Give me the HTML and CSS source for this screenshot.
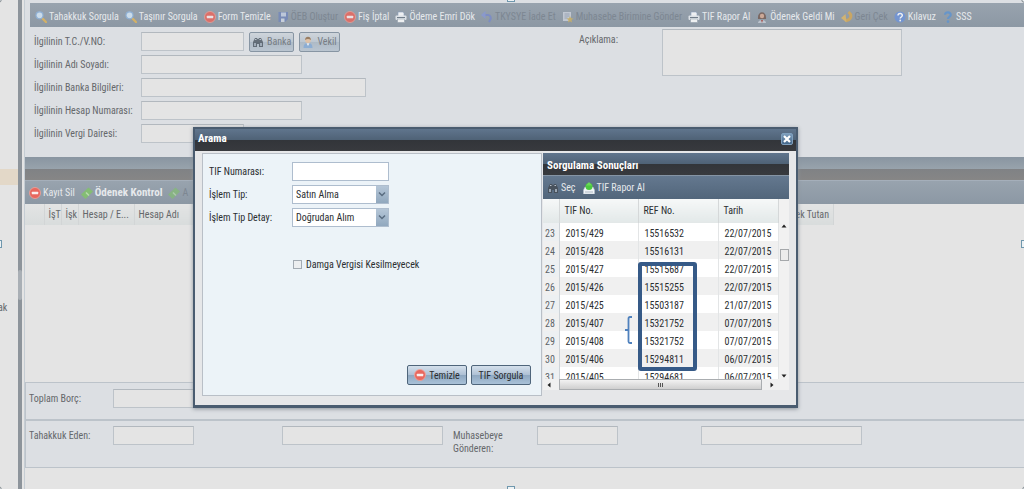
FILE: index.html
```html
<!DOCTYPE html>
<html lang="tr">
<head>
<meta charset="utf-8">
<title>Arama</title>
<link rel="stylesheet" href="styles.css">
</head>
<body>
<svg class="defs" aria-hidden="true">
  <symbol id="i-search" viewBox="0 0 12 12"><path d="M6.500 6.500 11 11" stroke="#e0b65c" stroke-width="2.400" stroke-linecap="round"/><circle cx="4.500" cy="4.300" r="3.500" fill="#d5e7f6" stroke="#8fb4dc" stroke-width="1.200"/></symbol>
  <symbol id="i-minus" viewBox="0 0 12 12"><circle cx="6" cy="6" r="5.500" fill="#e8685f" stroke="#f0a39b" stroke-width=".8"/><rect x="2.800" y="4.800" width="6.400" height="2.400" rx=".5" fill="#fbeeee"/></symbol>
  <symbol id="i-save" viewBox="0 0 12 12"><path d="M1.500 1h9.500v7l-3 3H1.500z" fill="#6f84bd"/><rect x="4" y="1.500" width="5" height="4" fill="#cfd9ee"/><rect x="4" y="7.500" width="3.500" height="3.500" fill="#dfe5ef"/></symbol>
  <symbol id="i-print" viewBox="0 0 12 12"><path d="M3 5V1h5l1 1v3" fill="#fff" stroke="#86a0c0" stroke-width=".6"/><rect x=".5" y="4.500" width="11" height="4.500" rx="1" fill="#e9edf1"/><path d="M2 6.500h8" stroke="#6c7885"/><rect x="2.500" y="8" width="7" height="3.500" fill="#fff" stroke="#8997a5" stroke-width=".5"/></symbol>
  <symbol id="i-undo" viewBox="0 0 12 12"><path d="M3 4h4a3 3 0 0 1 2 5l-1 2" fill="none" stroke="#7587d0" stroke-width="2"/><path d="M0 4l4.500-4v8z" fill="#8798da"/></symbol>
  <symbol id="i-note" viewBox="0 0 12 12"><rect x="1" y="1" width="8" height="9" fill="#d5dae3"/><path d="M2.500 3h5M2.500 5h5M2.500 7h3" stroke="#8d99ad" stroke-width=".8"/><path d="M8 5l1 2.200 2.500.3-2 1.500.5 2.500-2-1.200-2 1.200.5-2.500-2-1.500 2.500-.3z" fill="#d9b757"/></symbol>
  <symbol id="i-user" viewBox="0 0 12 12"><path d="M1.500 12c0-4 2-5 4.500-5s4.500 1 4.500 5z" fill="#80a8d6"/><path d="M4.500 7.200 6 10l1.500-2.800z" fill="#fff"/><circle cx="6" cy="4.200" r="2.800" fill="#eac09a"/><path d="M3 4c0-4.500 6-4.500 6 0-2-1.500-4-1.500-6 0z" fill="#8b633c"/></symbol>
  <symbol id="i-woman" viewBox="0 0 12 12"><path d="M2 8c-1-9 9-9 8 0z" fill="#765e56"/><circle cx="6" cy="5" r="2.200" fill="#d6aa94"/><path d="M2 12c0-4 8-4 8 0z" fill="#c4cbd4"/><path d="M5 9h2l-1 3z" fill="#a94c44"/></symbol>
  <symbol id="i-back" viewBox="0 0 12 12"><path d="M7.500 1c4.500 4 2 8-3 8.500" fill="none" stroke="#e0aa48" stroke-width="3"/><path d="M0 7 4.500 3l1 8.500z" fill="#edbd5c"/></symbol>
  <symbol id="i-help" viewBox="0 0 12 12"><circle cx="6" cy="6" r="5.500" fill="#6f94d8"/><path d="M4 4.500c0-3 4.500-2.500 4.300 0C8.200 6 6.200 6 6.200 7.500" fill="none" stroke="#fff" stroke-width="1.500"/><circle cx="6.200" cy="9.500" r=".9" fill="#fff"/></symbol>
  <symbol id="i-ask" viewBox="0 0 12 12"><path d="M3 3.800c0-3.500 6-3 5.700.2C8.500 6 6 6 6 8" fill="none" stroke="#5f94d0" stroke-width="2.200"/><circle cx="6" cy="10.600" r="1.300" fill="#5f94d0"/></symbol>
  <symbol id="i-bino" viewBox="0 0 12 12"><path d="M1 6 3 2h2l.5 1h1L7 2h2l2 4v5H7V8H5v3H1z" fill="#48525d"/><path d="M2 7h2v3H2zM8 7h2v3H8z" fill="#9aa6b3"/><path d="M3 3.500h1.500M7.500 3.500H9" stroke="#c5ced8" stroke-width=".9"/></symbol>
  <symbol id="i-tag" viewBox="0 0 12 12"><path d="M0 7.500 7.500.5 12 4.500 4.500 12z" fill="#84bd74"/><path d="M5 5.500l3 3" stroke="#b9dbae" stroke-width="1.500"/></symbol>
  <symbol id="i-export" viewBox="0 0 12 12"><path d="M.5 8 2 5h8l1.500 3v4H.5z" fill="#f0f4f7" stroke="#b6c2ce" stroke-width=".5"/><circle cx="6" cy="4.500" r="3.500" fill="#4cc93f"/><path d="M6 0 9 3.500H3z" fill="#6ada58"/><path d="M2 10h8" stroke="#aeb9c4"/></symbol>
</svg>

<div class="app">
  <aside class="side"><div class="side-mark"></div><span class="side-text">ak</span></aside>
  <div class="splitter"><span class="grip"></span></div>
  <main class="main">
    <nav class="toolbar top-bar">
      <button><svg><use href="#i-search"/></svg>Tahakkuk Sorgula</button>
      <button><svg><use href="#i-search"/></svg>Taşınır Sorgula</button>
      <button><svg><use href="#i-minus"/></svg>Form Temizle</button>
      <button disabled><svg><use href="#i-save"/></svg>ÖEB Oluştur</button>
      <button><svg><use href="#i-minus"/></svg>Fiş İptal</button>
      <button><svg><use href="#i-print"/></svg>Ödeme Emri Dök</button>
      <button disabled><svg><use href="#i-undo"/></svg>TKYSYE İade Et</button>
      <button disabled><svg><use href="#i-note"/></svg>Muhasebe Birimine Gönder</button>
      <button><svg><use href="#i-print"/></svg>TIF Rapor Al</button>
      <button><svg><use href="#i-woman"/></svg>Ödenek Geldi Mi</button>
      <button disabled><svg><use href="#i-back"/></svg>Geri Çek</button>
      <button><svg><use href="#i-help"/></svg>Kılavuz</button>
      <button><svg><use href="#i-ask"/></svg>SSS</button>
    </nav>

    <form class="person">
      <div class="fields">
        <label for="tc">İlgilinin T.C./V.NO:</label>
        <div class="row"><input id="tc" class="w-s">
          <button type="button" class="btn"><svg><use href="#i-bino"/></svg>Banka</button>
          <button type="button" class="btn"><svg><use href="#i-user"/></svg>Vekil</button></div>
        <label for="ad">İlgilinin Adı Soyadı:</label><input id="ad" class="w-m">
        <label for="banka">İlgilinin Banka Bilgileri:</label><input id="banka" class="w-l">
        <label for="hesap">İlgilinin Hesap Numarası:</label><input id="hesap" class="w-m">
        <label for="vergi">İlgilinin Vergi Dairesi:</label><input id="vergi" class="w-s">
      </div>
      <div class="note"><label for="aciklama">Açıklama:</label><textarea id="aciklama"></textarea></div>
    </form>

    <div class="grid-title"></div>
    <div class="toolbar grid-bar">
      <button><svg><use href="#i-minus"/></svg>Kayıt Sil</button>
      <button class="strong"><svg><use href="#i-tag"/></svg>Ödenek Kontrol</button>
      <button disabled><svg><use href="#i-tag"/></svg>A</button>
    </div>
    <div class="grid-body">
      <table class="accounts">
        <thead><tr><th class="c-no"></th><th class="c-ist">İşT</th><th class="c-ist">İşk</th><th class="c-code">Hesap / E...</th><th>Hesap Adı</th><th class="c-last">Ödenek Tutan</th></tr></thead>
      </table>
    </div>

    <section class="foot foot-sum">
      <label for="borc">Toplam Borç:</label><input id="borc">
    </section>
    <section class="foot foot-people">
      <label for="eden">Tahakkuk Eden:</label><input id="eden"><span></span><input aria-label="Tahakkuk Eden Adı">
      <label for="gonderen" class="two">Muhasebeye Gönderen:</label><input id="gonderen"><span></span><input aria-label="Gönderen Adı">
    </section>
    <div class="rest"></div>
  </main>
</div>

<div class="dialog" role="dialog" aria-labelledby="dlg-title">
  <header class="titlebar"><h1 id="dlg-title">Arama</h1>
    <button class="close" aria-label="Kapat"><svg viewBox="0 0 10 10"><path d="M2 2l6 6M8 2l-6 6" stroke="#fff" stroke-width="2.200"/></svg></button></header>
  <div class="dialog-body">
    <form class="search">
      <div class="criteria">
        <label for="tif">TIF Numarası:</label><input id="tif">
        <label for="tip">İşlem Tip:</label>
        <div class="combo"><select id="tip"><option>Satın Alma</option></select><svg viewBox="0 0 12 17"><path d="M3 6.500l3 3 3-3" fill="none" stroke="#596c80" stroke-width="1.500"/></svg></div>
        <label for="detay">İşlem Tip Detay:</label>
        <div class="combo"><select id="detay"><option>Doğrudan Alım</option></select><svg viewBox="0 0 12 17"><path d="M3 6.500l3 3 3-3" fill="none" stroke="#596c80" stroke-width="1.500"/></svg></div>
      </div>
      <label class="check"><input type="checkbox">Damga Vergisi Kesilmeyecek</label>
      <div class="actions">
        <button type="button" class="btn"><svg><use href="#i-minus"/></svg>Temizle</button>
        <button type="button" class="btn">TIF Sorgula</button>
      </div>
    </form>
    <section class="results">
      <h2 class="titlebar">Sorgulama Sonuçları</h2>
      <div class="toolbar">
        <button><svg><use href="#i-bino"/></svg>Seç</button>
        <button><svg><use href="#i-export"/></svg>TIF Rapor Al</button>
      </div>
      <div class="list">
        <table>
          <thead><tr><th class="c-row"></th><th class="c-tif">TIF No.</th><th class="c-ref">REF No.</th><th>Tarih</th></tr></thead>
          <tbody>
            <tr><td>23</td><td>2015/429</td><td>15516532</td><td>22/07/2015</td></tr>
            <tr><td>24</td><td>2015/428</td><td>15516131</td><td>22/07/2015</td></tr>
            <tr><td>25</td><td>2015/427</td><td>15515687</td><td>22/07/2015</td></tr>
            <tr><td>26</td><td>2015/426</td><td>15515255</td><td>22/07/2015</td></tr>
            <tr><td>27</td><td>2015/425</td><td>15503187</td><td>21/07/2015</td></tr>
            <tr><td>28</td><td>2015/407</td><td>15321752</td><td>07/07/2015</td></tr>
            <tr><td>29</td><td>2015/408</td><td>15321752</td><td>07/07/2015</td></tr>
            <tr><td>30</td><td>2015/406</td><td>15294811</td><td>06/07/2015</td></tr>
            <tr><td>31</td><td>2015/405</td><td>15294681</td><td>06/07/2015</td></tr>
          </tbody>
        </table>
        <div class="vbar"><svg class="arrow" viewBox="0 0 6 6"><path d="M3 1.500 5.500 4.500h-5z"/></svg><span></span><svg class="arrow" viewBox="0 0 6 6"><path d="M3 4.500.5 1.500h5z"/></svg></div>
        <div class="frame"></div>
        <svg class="brace" viewBox="0 0 9 28"><path d="M8 1H6Q4.500 1 4.500 2.500V14H1h3.500v11.500Q4.500 27 6 27h2" fill="none" stroke="#4f81bd" stroke-width="1.800"/></svg>
      </div>
      <div class="hbar"><svg class="arrow" viewBox="0 0 6 6"><path d="M1.500 3 4.500.5v5z"/></svg><span><svg class="arrow" viewBox="0 0 6 6"><path d="M.5 1v4M2.500 1v4M4.500 1v4" stroke="#555"/></svg></span><svg class="arrow" viewBox="0 0 6 6"><path d="M4.500 3 1.500.5v5z"/></svg></div>
    </section>
  </div>
</div>

<i class="handle h-top"></i><i class="handle h-right"></i><i class="handle h-bottom"></i><i class="handle h-left"></i>
<i class="handle knob k-tl"></i><i class="handle knob k-tr"></i><i class="handle knob k-bl"></i><i class="handle knob k-br"></i>
</body>
</html>
```
FILE: styles.css
```css
* { box-sizing: border-box; }
html, body { height: 100%; }
body {
  margin: 0; position: relative; overflow: hidden; background: #e4e4e4; color: #65686b;
  font: 10px/13px "Roboto Condensed", Roboto, "Liberation Sans", sans-serif;
}
input, textarea, select, button { font: inherit; color: inherit; margin: 0; padding: 0; }
input, textarea {
  height: 19px; border: 1px solid #bdc3c9; border-top-color: #b2b8be; border-radius: 0;
  background: #e4e4e4; min-width: 0; resize: none; display: block;
}
button { border: 0; background: none; display: flex; align-items: center; white-space: nowrap; }
svg { width: 12px; height: 12px; flex: none; }
.defs { position: absolute; width: 0; height: 0; }

.app { display: flex; height: 100%; }
.side { flex: 0 0 18px; }
.side-mark { margin-top: 169px; height: 16px; background: #e3d8c8; }
.side-text { display: block; margin-top: 116px; margin-left: -2px; }
.splitter { flex: 0 0 4px; background: #8d949b; margin-right: 2px; display: flex; align-items: center; }
.grip { width: 4px; height: 30px; margin-top: 80px; background: #a9afb5; border-radius: 4px; }
.main { flex: 1; display: flex; flex-direction: column; border-left: 1px solid #c5cdd4; background: #dcdfe3; min-width: 0; }

.toolbar { display: flex; align-items: center; color: #e6e9ec; background: linear-gradient(#98a3ae, #8c98a4); }
.toolbar svg { margin-right: 2px; }
.toolbar button:disabled { color: #7d8792; }
.toolbar button:disabled svg { opacity: .7; }
.top-bar { height: 24px; margin: 3px 0 0 5px; padding-left: 5px; gap: 6px; padding-top: 3px; }
.top-bar svg { opacity: .85; }

.person { display: flex; height: 130px; padding: 5px 0 0 9px; }
.fields { display: grid; grid-template-columns: 107px auto; grid-auto-rows: 19px; row-gap: 4px; align-items: center; width: 545px; align-content: start; }
.row { display: flex; gap: 5px; align-items: center; }
.w-s { width: 103px; }
.w-m { width: 161px; }
.w-l { width: 225px; }
.note { display: grid; grid-template-columns: 83px 240px; align-items: start; margin-top: -3px; }
.note label { margin-top: 4px; }
.note textarea { width: 240px; height: 47px; }

.btn {
  height: 20px; padding: 0 2px; gap: 3px; border: 1px solid #8795a3; border-radius: 2px;
  background: linear-gradient(#cfd5db, #bcc6d0 50%, #aebac6 50%, #bac5d0);
}
.row .btn { color: #777d84; }
.row .btn svg { opacity: .75; }

.grid-title { flex: none; height: 23px; background: linear-gradient(#8995a1, #98a3ac 52%, #808285 52%, #868686); }
.grid-bar { flex: none; height: 24px; gap: 6px; padding-left: 4px; border-top: 1px solid #a5afba; }
.strong { font-weight: bold; font-size: 11px; }
.grid-body { flex: none; height: 178px; background: #e4e4e4; }
table { border-collapse: collapse; table-layout: fixed; }
th { font-weight: normal; text-align: left; }
.accounts { width: 809px; }
.accounts th { height: 21px; padding: 0 0 0 4px; border-right: 1px solid #d2d5d6; background: linear-gradient(#e3e4e4, #d8dcdc); white-space: nowrap; }
.accounts .c-no { width: 19px; }
.accounts .c-ist { width: 17px; }
.accounts .c-code { width: 56px; }
.accounts .c-last { width: 60px; text-align: right; padding: 0 4px 0 0; }

.foot { border: 1px solid #bcc3ca; border-right: 0; display: grid; padding-left: 3px; align-items: start; }
.foot label { margin-top: 3px; }
.foot-sum { height: 38px; padding-top: 6px; grid-template-columns: 84px 161px; }
.foot-people { height: 49px; margin-top: -1px; border-top-width: 2px; padding-top: 5px; grid-template-columns: 84px 81px 88px 161px 94px 81px 83px 161px; }
.foot .two { padding: 0 30px 0 10px; }
.rest { flex: 1; background: #e4e4e4; }

.dialog {
  position: absolute; left: 193px; top: 127px; width: 605px; color: #2b2e31;
  border: 2px solid #4a5c70; border-bottom-width: 3px; background: #e6e7e9; box-shadow: 0 1px 4px #8d949b;
}
.titlebar {
  display: flex; align-items: center; justify-content: space-between; height: 22px; margin: 0; padding: 0 3px;
  color: #fff; font-size: 11px; font-weight: bold; background: linear-gradient(#60758d, #4e6175 52%, #32353a 52%, #383a3e);
}
.dialog > .titlebar { padding-bottom: 3px; }
.titlebar h1 { margin: 0; font-size: inherit; }
.close { width: 12px; height: 12px; border: 1px solid #7fa0be; border-radius: 2px; background: linear-gradient(#7d9dbb, #44678a); justify-content: center; }
.close svg { width: 10px; height: 10px; }
.dialog-body { display: flex; padding: 2px 7px 9px; height: 254px; }
.search { flex: 1; display: flex; flex-direction: column; border: 1px solid #b9bfc7; background: #ecf3f8; padding: 8px 10px 10px 6px; margin-right: 1px; }
.criteria { display: grid; grid-template-columns: 83px 97px; row-gap: 4px; align-items: center; }
.criteria input, .criteria select { width: 100%; height: 19px; background: #fff; border: 1px solid #aebdce; }
.combo { position: relative; }
.combo select { display: block; appearance: none; border-radius: 0; padding-left: 3px; }
.combo svg { position: absolute; right: 1px; top: 1px; width: 12px; height: 17px; background: linear-gradient(#b5c6d7, #91a8be); pointer-events: none; }
.check { display: flex; align-items: center; gap: 4px; margin: 31px 0 0 84px; }
.check input { appearance: none; width: 9px; height: 9px; border: 1px solid #a3abb3; background: #eceef0; }
.actions { display: flex; justify-content: flex-end; gap: 4px; margin-top: auto; }
.actions .btn {
  min-width: 60px; justify-content: center; border-color: #4f657b;
  background: linear-gradient(#d5e0ec, #adc0d4 50%, #8ea7c0 50%, #a9c1d8);
}

.results { flex: 0 0 246px; display: flex; flex-direction: column; min-width: 0; }
.results .titlebar { flex: none; padding: 2px 4px 0; }
.results .toolbar { height: 24px; flex: none; padding-left: 4px; gap: 7px; border-top: 1px solid #8594a4; background: linear-gradient(#64788f, #52667b); }
.list { position: relative; height: 180px; display: flex; overflow: hidden; background: #f4f4f4; }
.list table { flex: none; width: 236px; height: max-content; }
.list th { height: 24px; padding: 0 5px 2px; border-right: 1px solid #d5d8d9; background: linear-gradient(#f6f8f8, #e2e8e8); }
.list td { height: 18px; padding: 2px 0 0 6px; border-right: 1px solid #e3e5e6; background: #fff; }
.list tr:nth-child(even) td { background: #f0f0f0; }
.list td:first-child { padding-left: 2px; color: #5d6468; background: #edf0f2; border-right-color: #cdd3d8; }
.list .c-row { width: 16px; }
.list .c-tif { width: 79px; }
.list .c-ref { width: 80px; }
.vbar { flex: 1; display: flex; flex-direction: column; align-items: center; padding-top: 24px; background: #f1f1f1; }
.vbar span { width: 9px; height: 12px; margin: 20px 0 auto; border: 1px solid #a5a8ab; background: #ececec; }
.arrow { width: 6px; height: 6px; fill: #222; }
.hbar { display: flex; align-items: center; gap: 7px; height: 11px; padding: 0 14px 0 3px; background: #f0f0f0; }
.hbar span { flex: 1; height: 11px; border: 1px solid #aaadb0; background: linear-gradient(#f2f2f2, #cfcfcf); display: grid; place-items: center; }
/* Annotation drawn over the list */
.frame { position: absolute; left: 95px; top: 63px; width: 59px; height: 109px; border: 4px solid #365a87; border-radius: 3px; }
.brace { position: absolute; left: 81px; top: 117px; width: 9px; height: 28px; }

/* Selection handles around the canvas */
.handle { position: absolute; width: 8px; height: 8px; border: 1px solid #6f97ad; background: #eef2f4; }
.knob { border-radius: 50%; border-color: #7d858b; }
.h-top { top: -6px; left: 507px; }
.h-bottom { bottom: -5px; left: 507px; }
.h-left { left: -6px; top: 240px; }
.h-right { right: -5px; top: 240px; }
.k-tl { left: -6px; top: -5px; }
.k-tr { right: -5px; top: -5px; }
.k-bl { left: -6px; bottom: -5px; }
.k-br { right: -6px; bottom: -5px; }
```
